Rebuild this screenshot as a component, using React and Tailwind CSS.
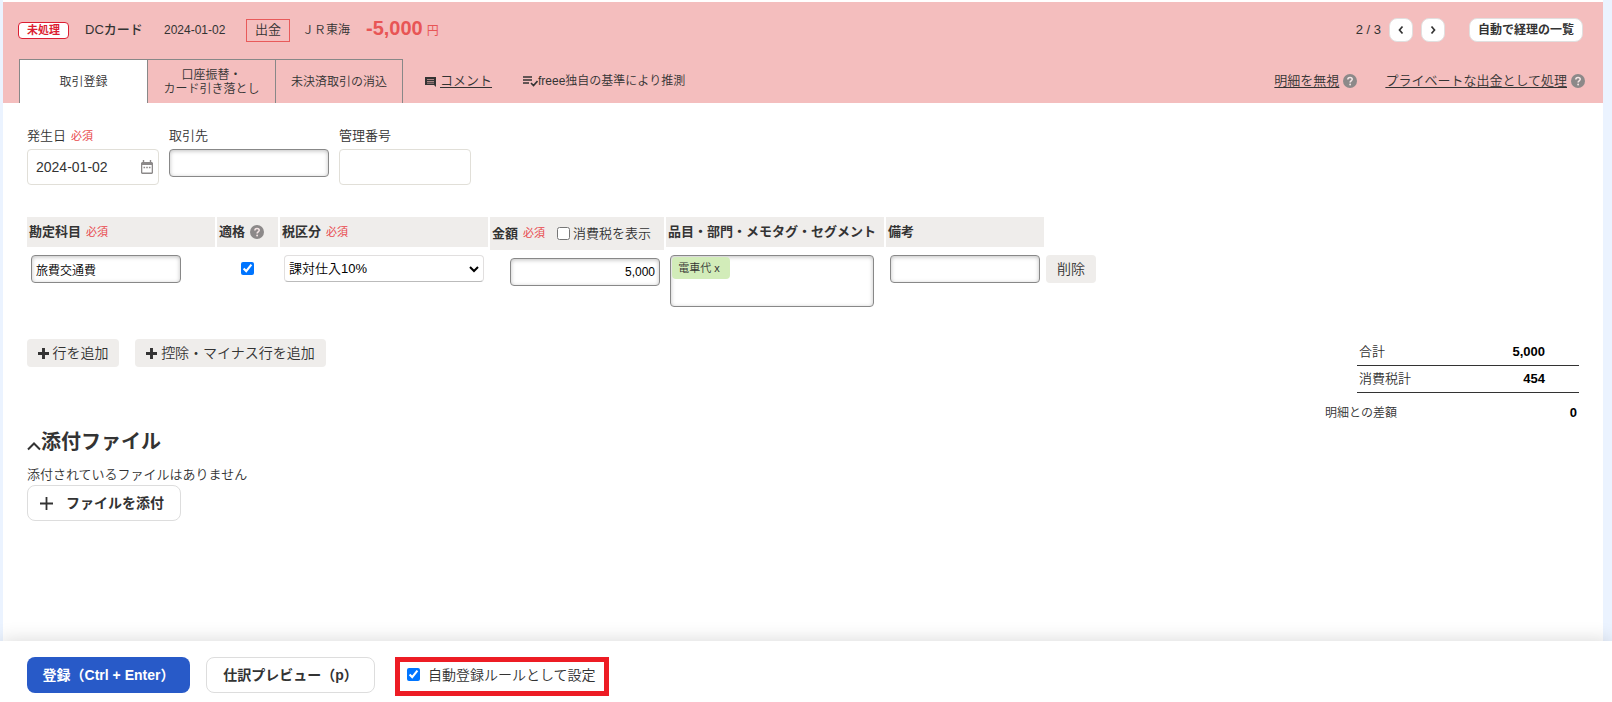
import React from "react";

const Required = () => (
  <span className="text-[11px] font-normal text-[#e8484b] ml-[5px]">必須</span>
);

const HelpIcon = () => (
  <svg viewBox="0 0 24 24" className="w-[14px] h-[14px] shrink-0" aria-hidden="true">
    <circle cx="12" cy="12" r="12" fill="#8c8989" />
    <path
      d="M8.3 9.4c0-2.2 1.6-3.6 3.8-3.6s3.7 1.3 3.7 3.3c0 2.6-3.6 2.8-3.6 5.4"
      fill="none"
      stroke="#f5e6e6"
      strokeWidth="2.6"
    />
    <circle cx="12.2" cy="18" r="1.6" fill="#f5e6e6" />
  </svg>
);

const PlusBold = () => (
  <svg viewBox="0 0 12 12" className="w-[11px] h-[11px] shrink-0" aria-hidden="true">
    <path d="M6 0v12M0 6h12" stroke="#333" strokeWidth="3.2" />
  </svg>
);

const Chevron = ({ d }) => (
  <svg viewBox="0 0 12 12" className="w-3 h-3" aria-hidden="true">
    <path d={d} fill="none" stroke="#333" strokeWidth="1.7" />
  </svg>
);

const insetInput =
  "block h-7 rounded-[4px] border border-[#888] bg-white px-1 text-xs text-black shadow-[inset_0_1px_4px_rgba(0,0,0,0.25)]";
const plainInput =
  "block w-full h-9 rounded-[4px] border border-[#e1dfd8] bg-white px-2 text-sm text-[#333]";
const grayButton =
  "flex items-center justify-center gap-1 h-7 rounded-[4px] bg-[#efedeb] text-sm text-[#333]";
const headCell = "flex items-center h-[30px] bg-[#efedeb] px-0.5 text-[13px] font-bold";

const StatementHeader = () => (
  <header className="bg-[#f4bebe] pl-[15px] pr-[18px]">
    <div className="flex items-start h-[57px] pt-4">
      <div className="flex items-center h-6 flex-1 whitespace-nowrap">
        <span className="flex items-center justify-center w-[51px] h-[17px] rounded-[4px] border border-[#dc1e32] bg-white text-[11px] font-bold text-[#dc1e32]">
          未処理
        </span>
        <span className="ml-4 w-[79px] text-[13px] font-medium">DCカード</span>
        <span className="w-[82px] text-xs">2024-01-02</span>
        <span className="flex items-center justify-center w-11 h-[23px] border border-[#e85a5a] text-[13px]">
          出金
        </span>
        <span className="ml-3 text-xs">ＪＲ東海</span>
        <span className="ml-4 mb-1 text-xl leading-5 font-bold text-[#e85555]">
          -5,000
          <span className="text-xs font-normal ml-1">円</span>
        </span>
      </div>
      <div className="flex items-center h-6 pr-0.5">
        <span className="text-[13px] mr-2">2 / 3</span>
        <button
          type="button"
          aria-label="前へ"
          className="flex items-center justify-center w-6 h-6 mr-2 rounded-[8px] border border-[#e1dfdf] bg-white"
        >
          <Chevron d="M7.5 2.5L4.5 6l3 3.5" />
        </button>
        <button
          type="button"
          aria-label="次へ"
          className="flex items-center justify-center w-6 h-6 mr-6 rounded-[8px] border border-[#e1dfdf] bg-white"
        >
          <Chevron d="M4.5 2.5l3 3.5-3 3.5" />
        </button>
        <button
          type="button"
          className="w-[114px] h-6 rounded-[8px] border border-[#e1dfdf] bg-white text-xs font-bold whitespace-nowrap"
        >
          自動で経理の一覧
        </button>
      </div>
    </div>

    <div className="flex items-stretch h-11 pl-px text-xs whitespace-nowrap">
      <button type="button" className="w-32 border-t border-l border-[#888] bg-white">
        取引登録
      </button>
      <button type="button" className="w-32 border-t border-l border-[#888] leading-[14px]">
        口座振替・
        <br />
        カード引き落とし
      </button>
      <button type="button" className="w-32 border-t border-x border-[#888]">
        未決済取引の消込
      </button>
      <a href="#comment" className="flex items-center gap-1 ml-[22px] text-[13px]">
        <svg viewBox="0 0 11 11" className="w-[11px] h-[11px]" aria-hidden="true">
          <path d="M0 1h11v10L9 9H0z" fill="#333" />
          <path d="M2 3.5h7M2 5.5h7M2 7.2h7" stroke="#b98e8e" strokeWidth="0.9" />
        </svg>
        <span className="underline underline-offset-2">コメント</span>
      </a>
      <span className="flex items-center ml-[31px]">
        <svg viewBox="0 0 15 12" className="w-[15px] h-3" aria-hidden="true">
          <path
            d="M0 2h9M0 5h9M0 8h6M8 8l2.5 2.5L14.5 6"
            fill="none"
            stroke="#333"
            strokeWidth="1.6"
          />
        </svg>
        freee独自の基準により推測
      </span>
      <div className="flex items-center ml-auto text-[13px]">
        <a href="#ignore" className="underline underline-offset-2 mr-1">明細を無視</a>
        <HelpIcon />
        <a href="#private" className="underline underline-offset-2 ml-7 mr-1">
          プライベートな出金として処理
        </a>
        <HelpIcon />
      </div>
    </div>
  </header>
);

const BasicFields = () => (
  <div className="flex items-start gap-[10px] text-[13px]">
    <div className="w-[132px]">
      <label htmlFor="date" className="block h-6 leading-[22px]">
        発生日
        <Required />
      </label>
      <div className="relative">
        <input id="date" type="text" defaultValue="2024-01-02" className={plainInput} />
        <svg
          viewBox="0 0 12 14"
          className="absolute right-[6px] top-[11px] w-3 h-[14px]"
          aria-hidden="true"
        >
          <path d="M1 2h10l1 1v10l-1 1H1l-1-1V3zM1.3 5v7.6h9.4V5z" fill="#8c8989" fillRule="evenodd" />
          <path d="M2.5 0v3M9.5 0v3" stroke="#8c8989" strokeWidth="1.4" />
          <path d="M2.5 7.5h1.6M5.2 7.5h1.6M7.9 7.5h1.6" stroke="#8c8989" strokeWidth="1.5" />
        </svg>
      </div>
    </div>
    <div className="w-40">
      <label htmlFor="partner" className="block h-6 leading-[22px]">取引先</label>
      <input id="partner" type="text" className={`${insetInput} w-full`} />
    </div>
    <div className="w-[132px]">
      <label htmlFor="number" className="block h-6 leading-[22px]">管理番号</label>
      <input id="number" type="text" className={plainInput} />
    </div>
  </div>
);

const DetailTable = () => (
  <table className="mt-8 table-fixed w-[1071px] border-collapse text-left whitespace-nowrap">
    <colgroup>
      <col className="w-[190px]" />
      <col className="w-[63px]" />
      <col className="w-[210px]" />
      <col className="w-[176px]" />
      <col className="w-[220px]" />
      <col className="w-[160px]" />
      <col className="w-[52px]" />
    </colgroup>
    <thead>
      <tr className="align-top">
        <th className="p-0 pr-0.5">
          <div className={headCell}>
            勘定科目
            <Required />
          </div>
        </th>
        <th className="p-0 pr-0.5">
          <div className={`${headCell} gap-[5px]`}>
            適格
            <HelpIcon />
          </div>
        </th>
        <th className="p-0 pr-0.5">
          <div className={headCell}>
            税区分
            <Required />
          </div>
        </th>
        <th className="p-0 pr-0.5">
          <div className="flex items-center h-[33px] bg-[#efedeb] px-0.5 text-[13px] font-bold">
            金額
            <Required />
            <label className="flex items-center gap-[3px] ml-3 font-[350]">
              <input type="checkbox" className="w-[13px] h-[13px]" />
              消費税を表示
            </label>
          </div>
        </th>
        <th className="p-0 pr-0.5">
          <div className={headCell}>品目・部門・メモタグ・セグメント</div>
        </th>
        <th className="p-0 pr-0.5">
          <div className={headCell}>備考</div>
        </th>
        <td className="p-0" />
      </tr>
    </thead>
    <tbody>
      <tr className="align-top">
        <td className="p-0 pt-[5px] pl-1">
          <input
            type="text"
            aria-label="勘定科目"
            defaultValue="旅費交通費"
            className={`${insetInput} w-[150px]`}
          />
        </td>
        <td className="p-0 pt-3 pr-0.5">
          <input
            type="checkbox"
            aria-label="適格"
            defaultChecked
            className="block mx-auto w-[13px] h-[13px] accent-[#0075ff]"
          />
        </td>
        <td className="p-0 pt-[5px] pl-1">
          <div className="relative w-[200px]">
            <select
              aria-label="税区分"
              className="block appearance-none w-full h-[27px] rounded-[4px] border border-[#e1dfdf] border-b-[#bbb] bg-white pl-1 text-[13px] text-black"
            >
              <option>課対仕入10%</option>
            </select>
            <svg
              viewBox="0 0 10 7"
              className="pointer-events-none absolute right-[5px] top-[11px] w-[10px] h-[7px]"
              aria-hidden="true"
            >
              <path d="M1 1l4 4 4-4" fill="none" stroke="#000" strokeWidth="2" />
            </svg>
          </div>
        </td>
        <td className="p-0 pt-2 pl-5">
          <input
            type="text"
            aria-label="金額"
            defaultValue="5,000"
            className={`${insetInput} w-[150px] text-right`}
          />
        </td>
        <td className="p-0 pt-[5px] pl-1">
          <div className="w-[204px] h-[52px] rounded-[4px] border border-[#888] p-px shadow-[inset_0_1px_4px_rgba(0,0,0,0.25)]">
            <button
              type="button"
              className="block w-[58px] h-[22px] rounded-[4px] bg-[#d2ecb9] pr-1 text-[11px] text-[#333]"
            >
              電車代 x
            </button>
          </div>
        </td>
        <td className="p-0 pt-[5px] pl-1">
          <input type="text" aria-label="備考" className={`${insetInput} w-[150px]`} />
        </td>
        <td className="p-0 pt-[5px]">
          <button type="button" className={`${grayButton} w-[50px]`}>削除</button>
        </td>
      </tr>
    </tbody>
  </table>
);

const Attachments = () => (
  <section className="mt-[60px]">
    <h2 className="flex items-center text-xl leading-[30px] font-bold">
      <svg viewBox="0 0 14 10" className="w-[14px] h-[10px] mt-2" aria-hidden="true">
        <path d="M1 8.5l6-6 6 6" fill="none" stroke="#333" strokeWidth="2" />
      </svg>
      添付ファイル
    </h2>
    <p className="mt-2 text-[13px] leading-5">添付されているファイルはありません</p>
    <button
      type="button"
      className="flex items-center gap-[13px] w-[154px] h-9 pl-3 rounded-[8px] border border-[#ddd] bg-white text-sm font-bold whitespace-nowrap"
    >
      <svg viewBox="0 0 13 13" className="w-[13px] h-[13px]" aria-hidden="true">
        <path d="M6.5 0v13M0 6.5h13" stroke="#333" strokeWidth="1.8" />
      </svg>
      ファイルを添付
    </button>
  </section>
);

const Totals = () => (
  <div className="w-[254px] text-[13px]">
    <table className="w-[222px] ml-auto border-collapse">
      <tbody>
        <tr className="h-[26px] border-b border-[#333]">
          <th className="p-0 pl-0.5 text-left font-[350]">合計</th>
          <td className="p-0 pr-[34px] text-right font-bold text-black">5,000</td>
        </tr>
        <tr className="h-[27px] border-b border-[#333]">
          <th className="p-0 pl-0.5 text-left font-[350]">消費税計</th>
          <td className="p-0 pr-[34px] text-right font-bold text-black">454</td>
        </tr>
      </tbody>
    </table>
    <div className="flex items-center justify-between mt-[10px] pr-0.5 leading-5">
      <span className="text-xs leading-5">明細との差額</span>
      <span className="font-bold text-black">0</span>
    </div>
  </div>
);

const ActionBar = () => (
  <footer className="sticky bottom-0 flex items-start gap-4 bg-white pl-[27px] pt-4 pb-[6px] text-sm whitespace-nowrap shadow-[0_0_20px_rgba(0,0,0,0.16)]">
    <button
      type="button"
      className="w-[163px] h-9 rounded-[8px] bg-[#285ac8] font-bold text-white"
    >
      登録（Ctrl + Enter）
    </button>
    <button
      type="button"
      className="w-[169px] h-9 rounded-[8px] border border-[#ddd] bg-white font-bold"
    >
      仕訳プレビュー（p）
    </button>
    <label className="flex items-center gap-2 w-[214px] h-[39px] ml-1 pl-[7px] pb-1 border-[5px] border-[#ed1c24]">
      <input
        type="checkbox"
        defaultChecked
        className="w-[13px] h-[13px] accent-[#0075ff]"
      />
      自動登録ルールとして設定
    </label>
  </footer>
);

const App = () => {
  return (
    <div className="flex flex-col min-h-screen bg-[#ebf3ff] text-[#333] font-[350] font-['Liberation_Sans','Noto_Sans_CJK_JP',sans-serif]">
      <div className="flex-1 ml-[3px] mr-[9px] pt-0.5 bg-white">
        <StatementHeader />
        <main className="px-6 pt-[22px]">
          <BasicFields />
          <DetailTable />
          <div className="flex items-start justify-between mt-8">
            <div>
              <div className="flex gap-4">
                <button type="button" className={`${grayButton} w-[92px]`}>
                  <PlusBold />
                  行を追加
                </button>
                <button type="button" className={`${grayButton} w-[191px]`}>
                  <PlusBold />
                  控除・マイナス行を追加
                </button>
              </div>
              <Attachments />
            </div>
            <Totals />
          </div>
        </main>
      </div>
      <ActionBar />
    </div>
  );
};

export default App;
